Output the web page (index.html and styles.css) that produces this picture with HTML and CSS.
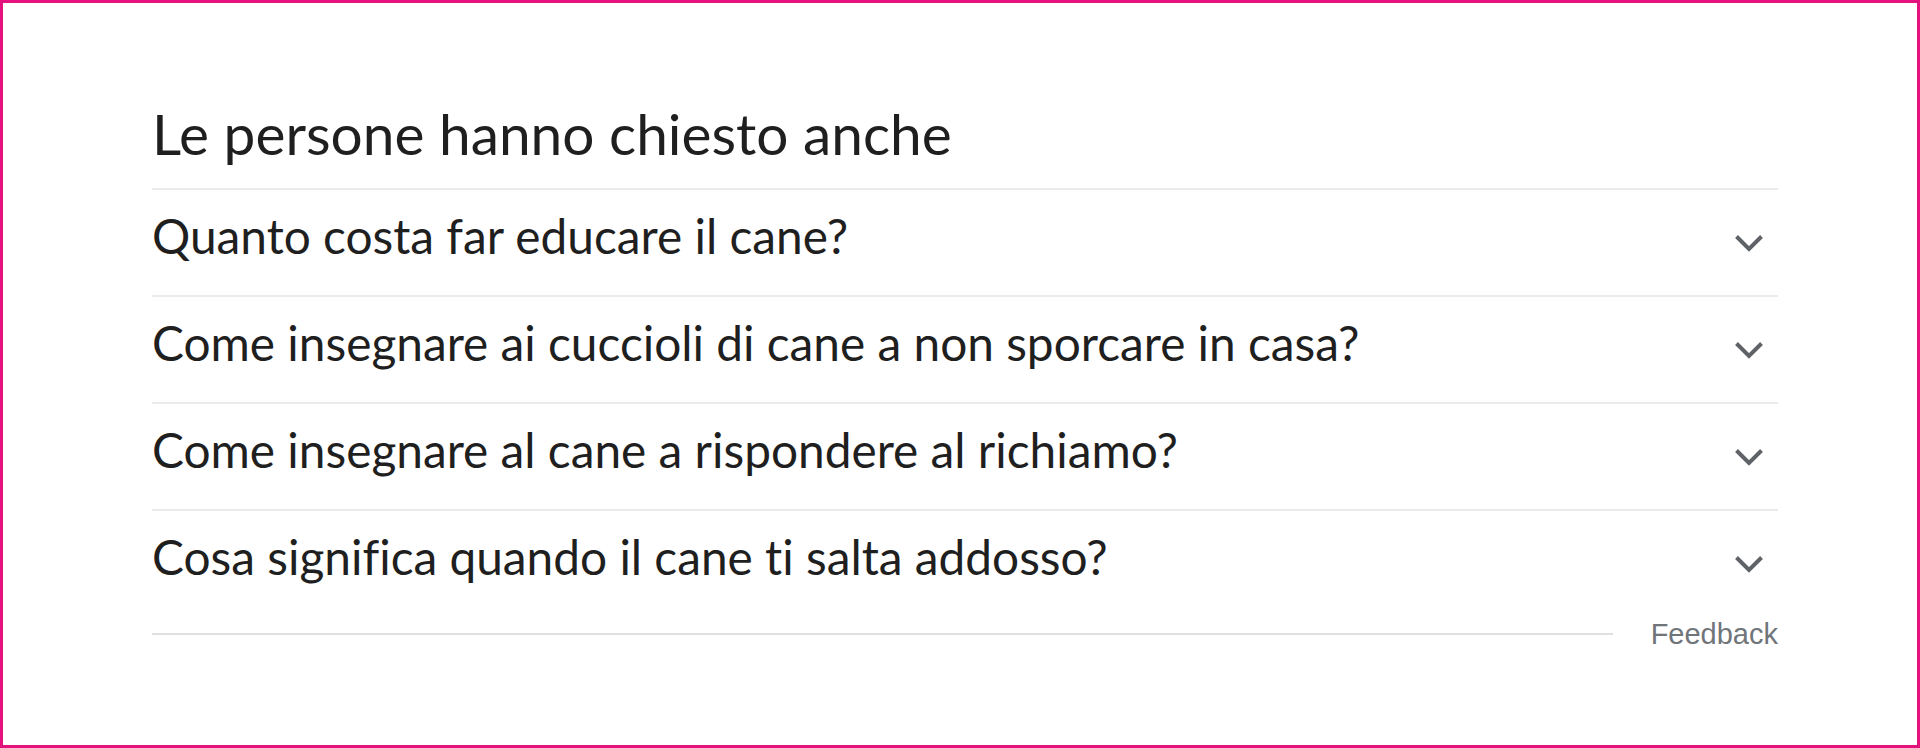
FILE: index.html
```html
<!DOCTYPE html>
<html lang="it">
<head>
<meta charset="utf-8">
<title>Le persone hanno chiesto anche</title>
<link rel="stylesheet" href="styles.css">
</head>
<body>
<div class="frame">
  <section class="paa">
    <h2 class="paa-title">Le persone hanno chiesto anche</h2>
    <div class="paa-list">
      <div class="paa-row">
        <span class="paa-q">Quanto costa far educare il cane?</span>
        <svg class="chev" viewBox="0 0 30 18" width="30" height="18"><path d="M2.5 2.5 L15 15 L27.5 2.5"/></svg>
      </div>
      <div class="paa-row">
        <span class="paa-q">Come insegnare ai cuccioli di cane a non sporcare in casa?</span>
        <svg class="chev" viewBox="0 0 30 18" width="30" height="18"><path d="M2.5 2.5 L15 15 L27.5 2.5"/></svg>
      </div>
      <div class="paa-row">
        <span class="paa-q">Come insegnare al cane a rispondere al richiamo?</span>
        <svg class="chev" viewBox="0 0 30 18" width="30" height="18"><path d="M2.5 2.5 L15 15 L27.5 2.5"/></svg>
      </div>
      <div class="paa-row">
        <span class="paa-q">Cosa significa quando il cane ti salta addosso?</span>
        <svg class="chev" viewBox="0 0 30 18" width="30" height="18"><path d="M2.5 2.5 L15 15 L27.5 2.5"/></svg>
      </div>
    </div>
    <div class="paa-foot">
      <div class="foot-line"></div>
      <span class="feedback">Feedback</span>
    </div>
  </section>
</div>
</body>
</html>
```

FILE: styles.css
```css
html, body {
  margin: 0;
  padding: 0;
  background: #ffffff;
}

.frame {
  box-sizing: border-box;
  width: 1920px;
  height: 748px;
  border: 3px solid #e5127d;
  background: #ffffff;
  padding: 96px 0 0 149px;
}

.paa {
  width: 1626px;
}

.paa-title {
  margin: 0 0 21px 0;
  font-family: Lato, "Open Sans", sans-serif;
  font-weight: 400;
  font-size: 56.8px;
  line-height: 68px;
  color: #1f1f1f;
  font-variant-ligatures: none;
}

.paa-row {
  box-sizing: border-box;
  height: 107px;
  border-top: 2px solid #ebebeb;
  display: flex;
  align-items: center;
  justify-content: space-between;
}

.paa-q {
  margin-bottom: 14px;
  font-family: Lato, "Open Sans", sans-serif;
  font-size: 47.8px;
  line-height: 57px;
  color: #1f1f1f;
  font-variant-ligatures: none;
}

.chev {
  margin-right: 14px;
  fill: none;
  stroke: #5f6368;
  stroke-width: 4;
}

.paa-foot {
  height: 36px;
  display: flex;
  align-items: center;
  gap: 38px;
}

.foot-line {
  flex: 1;
  height: 2px;
  background: #e0e0e0;
}

.feedback {
  font-family: "Liberation Sans", Arial, sans-serif;
  font-size: 29px;
  line-height: 36px;
  color: #70757a;
}
```
